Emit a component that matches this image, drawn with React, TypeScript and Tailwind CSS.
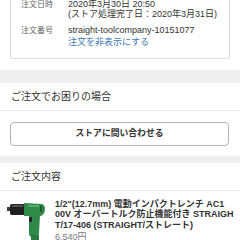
const jp = { fontFamily: '"Liberation Sans", "Noto Sans CJK JP", sans-serif' }

function WrenchImage() {
  return (
    <svg width="40" height="44" viewBox="0 0 40 44">
      {/* anvil tip */}
      <rect x="1" y="8" width="4" height="4" fill="#3a3a3a" />
      {/* hammer case */}
      <rect x="4" y="5" width="15" height="11" rx="2" fill="#1f1f1f" />
      <rect x="6" y="6" width="11" height="2" fill="#555" />
      {/* motor body */}
      <path d="M18 4 L36 5 Q39 6 39 10 Q39 15 35 17 L18 17 Z" fill="#2f8a4a" />
      <rect x="22" y="6" width="11" height="2" fill="#4fae6a" />
      <rect x="34" y="7" width="2" height="6" fill="#1d5c31" />
      {/* handle */}
      <path d="M23 16 L34 16 L33 34 Q33 38 29 38 L26 38 Q23 38 23 34 Z" fill="#2f8a4a" />
      <rect x="23" y="18" width="3" height="5" rx="1" fill="#222" />
      <rect x="25" y="36" width="8" height="6" rx="1" fill="#2a7a42" />
      <rect x="28" y="41" width="2" height="3" fill="#222" />
    </svg>
  )
}

export default function App() {
  return (
    <div className="w-[240px] h-[240px] overflow-hidden bg-white text-[#333]" style={jp}>
      {/* order info card (scrolled) */}
      <div className="mx-[10px] border-x border-b border-[#dcdcdc] rounded-b-[3px] pl-[10px] pb-[10px]">
        <div className="flex">
          <div className="w-[47px] text-[8px] leading-[9.5px] text-[#666]">注文日時</div>
          <div className="text-[9px] leading-[9.5px]">
            <div>2020年3月30日 20:50</div>
            <div>(ストア処理完了日：2020年3月31日)</div>
          </div>
        </div>
        <div className="flex mt-[7px]">
          <div className="w-[47px] text-[8px] leading-[9.5px] text-[#666]">注文番号</div>
          <div className="text-[9px] leading-[9.5px]">
            <div>straight-toolcompany-10151077</div>
            <div className="mt-[2.5px] text-[#3d78b5]">注文を非表示にする</div>
          </div>
        </div>
      </div>
      <div className="h-[11px]" />
      <div className="h-[13px] bg-[#efefef]" />

      <div className="h-[28px] flex items-center px-[11px] border-b border-[#e6e6e6] text-[10px]">
        ご注文でお困りの場合
      </div>
      <div className="pt-[11px] pb-[10px] pl-[10px] pr-[11px]">
        <div className="h-[24px] rounded-[4px] border border-[#b4b4b4] flex items-center justify-center text-[8.8px] font-semibold">
          ストアに問い合わせる
        </div>
      </div>
      <div className="h-[7px] bg-[#efefef]" />

      <div className="h-[28px] flex items-center px-[11px] border-b border-[#e6e6e6] text-[10px]">
        ご注文内容
      </div>
      <div className="flex pt-[8px]">
        <div className="w-[55px] pl-[6px] shrink-0">
          <WrenchImage />
        </div>
        <div className="w-[180px]">
          <div className="text-[9px] leading-[10.5px] font-semibold whitespace-nowrap">
            <div>1/2"(12.7mm) 電動インパクトレンチ AC1</div>
            <div>00V オーバートルク防止機能付き STRAIGH</div>
            <div>T/17-406 (STRAIGHT/ストレート)</div>
          </div>
          <div className="mt-[2px] text-[9px] leading-[10px] text-[#777]">6,540円</div>
        </div>
      </div>
    </div>
  )
}
